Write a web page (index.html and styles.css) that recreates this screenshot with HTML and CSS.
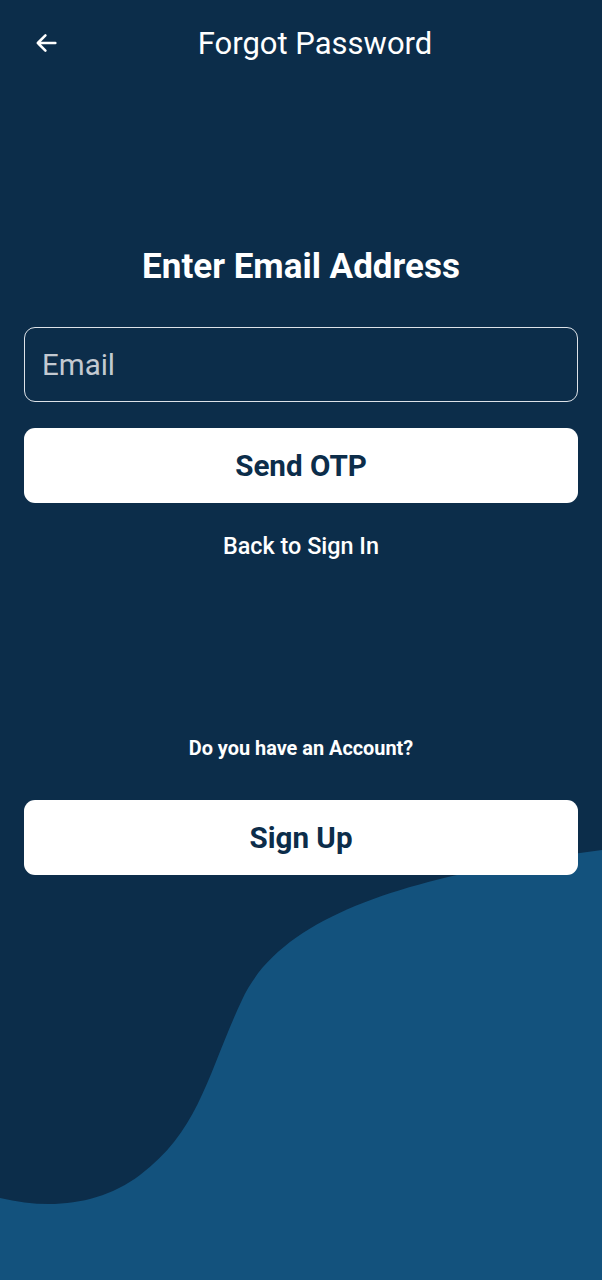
FILE: index.html
```html
<!DOCTYPE html>
<html>
<head>
<meta charset="utf-8">
<link rel="stylesheet" href="styles.css">
</head>
<body>
<div class="screen">
  <svg class="wave" viewBox="0 0 602 1280" preserveAspectRatio="none" aria-hidden="true">
    <path d="M602,850 C440,872 285,905 242,1000 C208,1072 200,1130 140,1175 C100,1205 50,1210 0,1198 L0,1280 L602,1280 Z" fill="#13527d"/>
  </svg>
  <header class="appbar">
    <div class="back">
      <svg width="28" height="28" viewBox="0 0 24 24"><path d="M20 12H5M11.5 5.5L5 12l6.5 6.5" fill="none" stroke="#fff" stroke-width="2.2" stroke-linecap="round" stroke-linejoin="round"/></svg>
    </div>
    <h1 class="title">Forgot Password</h1>
  </header>
  <main class="content">
    <h2 class="heading">Enter Email Address</h2>
    <div class="field"><span class="placeholder">Email</span></div>
    <div class="btn btn-otp">Send OTP</div>
    <div class="link">Back to Sign In</div>
    <div class="question">Do you have an Account?</div>
    <div class="btn btn-signup">Sign Up</div>
  </main>
</div>
</body>
</html>
```
FILE: styles.css
```css
* { box-sizing: border-box; margin: 0; padding: 0; }
html, body { width: 602px; height: 1280px; }
body {
  background: #0c2d4a;
  font-family: Roboto, "Noto Sans", sans-serif;
  color: #fff;
  overflow: hidden;
}
.screen {
  position: relative;
  width: 602px;
  height: 1280px;
  display: flex;
  flex-direction: column;
}
.wave {
  position: absolute;
  left: 0; top: 0;
  width: 602px; height: 1280px;
  z-index: 0;
}
.appbar {
  position: relative;
  z-index: 1;
  height: 86px;
  display: flex;
  align-items: center;
  padding-left: 32px;
  padding-right: 36px;
}
.back {
  width: 32px;
  display: flex;
  align-items: center;
}
.title {
  flex: 1;
  text-align: center;
  font-size: 31px;
  font-weight: 400;
}
.content {
  position: relative;
  z-index: 1;
  display: flex;
  flex-direction: column;
  align-items: stretch;
  padding: 0 24px;
}
.heading {
  margin-top: 162px;
  height: 38px;
  line-height: 38px;
  text-align: center;
  font-size: 35px;
  font-weight: 700;
}
.field {
  margin-top: 41px;
  height: 75px;
  border: 1.5px solid #dde2e8;
  border-radius: 11px;
  display: flex;
  align-items: center;
  padding-left: 17px;
}
.placeholder {
  font-size: 29.5px;
  color: #c3c9d1;
}
.btn {
  height: 75px;
  background: #fff;
  border-radius: 11px;
  display: flex;
  align-items: center;
  justify-content: center;
  color: #0c2d4a;
  font-size: 29.6px;
  font-weight: 700;
}
.btn-otp { margin-top: 26px; }
.link {
  margin-top: 30px;
  height: 26px;
  line-height: 26px;
  text-align: center;
  font-size: 23.4px;
  font-weight: 500;
}
.question {
  margin-top: 178px;
  height: 24px;
  line-height: 24px;
  text-align: center;
  font-size: 19.9px;
  font-weight: 700;
}
.btn-signup { margin-top: 39px; }
```
